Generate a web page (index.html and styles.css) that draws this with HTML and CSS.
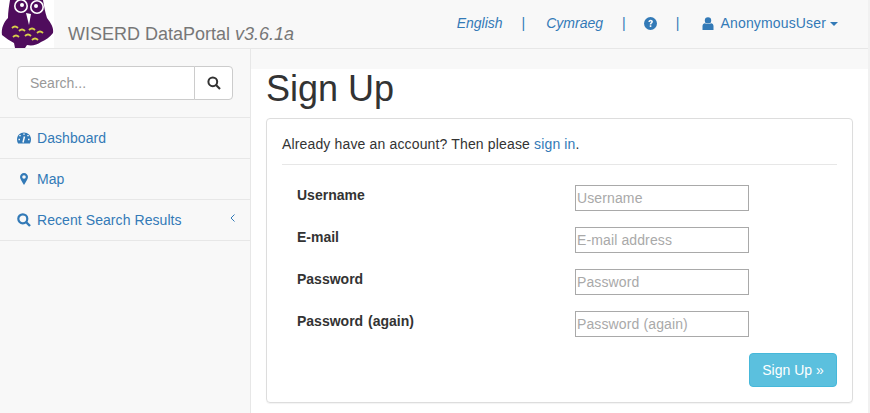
FILE: index.html
```html
<!DOCTYPE html>
<html lang="en">
<head>
    <meta charset="UTF-8">
    <title>Sign Up</title>
    <link rel="stylesheet" href="styles.css">
</head>
<body>
    <nav class="navbar">
        <div class="brand">
            <svg class="owl" width="54" height="48" viewBox="0 0 54 48">
                <rect width="54" height="48" fill="#fff"/>
                <path d="M10 0 H43 C44 6 45 12 47 18 C51 23 54 28 53 33 C50 37 46 40 41 42 C37 45 32 46 27 45 L25 48 H15 L14 43 C10 41 6 38 2 35 C1 28 4 22 8 18 C8 12 9 6 10 0 Z" fill="#4f0c5c"/>
                <circle cx="21" cy="6" r="6.200" fill="#4f0c5c" stroke="#fff" stroke-width="1.600"/>
                <circle cx="37" cy="7" r="6.200" fill="#4f0c5c" stroke="#fff" stroke-width="1.600"/>
                <circle cx="22" cy="5" r="2" fill="#fff"/>
                <circle cx="36" cy="6" r="2" fill="#fff"/>
                <path d="M26 13 L31 14 L29 25 Z" fill="#fff"/>
                <g fill="none" stroke="#d8cf4a" stroke-width="1.800">
                    <path d="M12 28 q3 -3 6 0"/><path d="M19 31 q3 -3 6 0"/><path d="M29 30 q3 -3 6 0"/><path d="M37 33 q3 -3 6 0"/>
                    <path d="M13 37 q3 -3 6 0"/><path d="M25 36 q3 -3 6 0"/><path d="M32 40 q3 -3 6 0"/>
                </g>
            </svg>
            <span class="brand-name">WISERD DataPortal <em>v3.6.1a</em></span>
        </div>
        <ul class="top-links">
            <li><a href="#"><em>English</em></a></li>
            <li class="sep">|</li>
            <li><a href="#"><em>Cymraeg</em></a></li>
            <li class="sep">|</li>
            <li class="help"><a href="#">
                <svg class="icon" width="13" height="13" viewBox="0 0 14 14"><circle cx="7" cy="7" r="7" fill="#337ab7"/><path d="M4.700 5.400 C4.800 3.800 5.900 3 7.200 3 C8.600 3 9.600 3.900 9.600 5 C9.600 6.500 7.900 6.600 7.900 8 H6.200 C6.200 6 7.800 6 7.800 5.100 C7.800 4.700 7.500 4.500 7.100 4.500 C6.700 4.500 6.400 4.800 6.300 5.500 Z M6.200 8.900 H7.900 V10.700 H6.200 Z" fill="#f8f8f8"/></svg>
            </a></li>
            <li class="sep">|</li>
            <li class="user-item"><a href="#" class="user">
                <svg class="icon" width="12" height="13" viewBox="0 0 12 13"><circle cx="6" cy="3.400" r="3.200" fill="#337ab7"/><path d="M0.500 13 V9 C0.500 7.400 1.700 6.300 3 6.200 C4.600 7.400 7.400 7.400 9 6.200 C10.300 6.300 11.500 7.400 11.500 9 V13 Z" fill="#337ab7"/></svg>
                AnonymousUser<span class="caret"></span>
            </a></li>
        </ul>
    </nav>

    <div class="wrapper">
        <aside class="sidebar">
            <div class="search-box">
                <form class="search-group">
                    <input type="text" placeholder="Search...">
                    <button type="button">
                        <svg width="14" height="14" viewBox="0 0 14 14"><circle cx="5.800" cy="5.800" r="4.400" fill="none" stroke="#333" stroke-width="2"/><path d="M9 9 L13 13" stroke="#333" stroke-width="2.200"/></svg>
                    </button>
                </form>
            </div>
            <ul class="side-menu">
                <li><a href="#">
                    <svg class="side-icon" width="14" height="12" viewBox="0 0 14 12"><path d="M7 0.500 C3 0.500 0 3.500 0 7.500 C0 9 0.400 10.400 1.100 11.500 H12.900 C13.600 10.400 14 9 14 7.500 C14 3.500 11 0.500 7 0.500 Z" fill="#337ab7"/><path d="M6 10.500 L7.500 4.500 M3 3 V4.300 M7 1.500 V2.800 M11 3 V4.300 M1.500 7.500 H3 M11 7.500 H12.500" stroke="#f8f8f8" stroke-width="1.500"/></svg>
                    Dashboard</a></li>
                <li><a href="#">
                    <svg class="side-icon pin" width="8" height="12" viewBox="0 0 8 12"><path fill-rule="evenodd" d="M4 0 C6.200 0 8 1.800 8 4 C8 6 5.500 9.500 4 12 C2.500 9.500 0 6 0 4 C0 1.800 1.800 0 4 0 Z M4 2.200 A1.800 1.800 0 1 0 4 5.800 A1.800 1.800 0 1 0 4 2.200 Z" fill="#337ab7"/></svg>
                    Map</a></li>
                <li><a href="#">
                    <svg class="side-icon" width="14" height="14" viewBox="0 0 14 14"><circle cx="5.800" cy="5.800" r="4.500" fill="none" stroke="#337ab7" stroke-width="2.200"/><path d="M9 9 L13 13" stroke="#337ab7" stroke-width="2.400"/></svg>
                    Recent Search Results
                    <svg class="chevron" width="5" height="8" viewBox="0 0 5 8"><path d="M4.500 0.500 L1 4 L4.500 7.500" fill="none" stroke="#337ab7"/></svg>
                </a></li>
            </ul>
        </aside>

        <main class="content">
            <h1>Sign Up</h1>
            <div class="panel">
                <p class="intro">Already have an account? Then please <a href="#">sign in</a>.</p>
                <form class="signup-form">
                    <div class="form-row">
                        <label for="username">Username</label>
                        <input type="text" id="username" placeholder="Username">
                    </div>
                    <div class="form-row">
                        <label for="email">E-mail</label>
                        <input type="text" id="email" placeholder="E-mail address">
                    </div>
                    <div class="form-row">
                        <label for="password1">Password</label>
                        <input type="text" id="password1" placeholder="Password">
                    </div>
                    <div class="form-row">
                        <label for="password2">Password (again)</label>
                        <input type="text" id="password2" placeholder="Password (again)">
                    </div>
                    <div class="form-actions">
                        <button type="submit">Sign Up »</button>
                    </div>
                </form>
            </div>
        </main>
    </div>
</body>
</html>
```

FILE: styles.css
```css
* {
    box-sizing: border-box;
}
html, body {
    height: 100%;
}
body {
    margin: 0;
    overflow: hidden;
    border-right: 2px solid #f1f1f1;
    background-color: #f8f8f8;
    color: #333;
    font-family: "Liberation Sans", Arial, sans-serif;
    font-size: 14px;
    line-height: 20px;
}
a {
    color: #337ab7;
    text-decoration: none;
}
ul {
    margin: 0;
    padding: 0;
    list-style: none;
}

.navbar {
    display: flex;
    justify-content: space-between;
    height: 49px;
    border-bottom: 1px solid #e7e7e7;
}
.brand {
    display: flex;
}
.owl {
    display: block;
}
.brand-name {
    margin: 24px 0 0 14px;
    color: #777;
    font-size: 18px;
}
.top-links {
    display: flex;
    align-items: center;
    height: 46px;
    padding-right: 30px;
}
.top-links .sep {
    margin: 0 21px 0 19px;
    color: #337ab7;
}
.help {
    margin-left: -3px;
}
.user-item {
    margin-left: 2px;
}
.icon {
    vertical-align: -2px;
}
.user {
    letter-spacing: .15px;
}
.user .icon {
    margin-right: 3px;
}
.caret {
    display: inline-block;
    margin-left: 4px;
    vertical-align: 2px;
    border-top: 4px solid #337ab7;
    border-left: 4px solid transparent;
    border-right: 4px solid transparent;
}

.wrapper {
    display: flex;
    height: 364px;
}
.sidebar {
    flex: none;
    width: 251px;
    border-right: 1px solid #e7e7e7;
}
.search-box {
    height: 69px;
    padding: 17px 17px 0;
    border-bottom: 1px solid #e7e7e7;
}
.search-group {
    display: flex;
    height: 34px;
}
.search-group input {
    flex: 1;
    min-width: 0;
    padding: 6px 12px;
    border: 1px solid #ccc;
    border-radius: 4px 0 0 4px;
    background: #fff;
    color: #555;
    font: inherit;
}
.search-group input::placeholder {
    color: #999;
}
.search-group button {
    width: 39px;
    margin-left: -1px;
    padding: 2px 0 0;
    border: 1px solid #ccc;
    border-radius: 0 4px 4px 0;
    background: #fff;
}
.side-menu li {
    height: 41px;
    border-bottom: 1px solid #e7e7e7;
}
.side-menu a {
    display: flex;
    align-items: center;
    height: 40px;
    padding: 0 15px 0 17px;
    letter-spacing: .07px;
}
.side-icon {
    width: 14px;
    margin-right: 6px;
}
.pin {
    padding: 0 3px;
}
.chevron {
    margin: -5px 0 0 auto;
}

.content {
    flex: 1;
    margin-top: 20px;
    padding: 0 15px;
    background-color: #fff;
}
h1 {
    margin: 0 0 9px;
    font-size: 36px;
    font-weight: 500;
    line-height: 40px;
}
.panel {
    width: 587px;
    height: 285px;
    padding: 15px;
    border: 1px solid #ddd;
    border-radius: 4px;
    box-shadow: 0 1px 1px rgba(0, 0, 0, .05);
}
.intro {
    margin: 0 0 20px;
    padding-bottom: 10px;
    border-bottom: 1px solid #e7e7e7;
    letter-spacing: .15px;
}
.form-row {
    display: flex;
    align-items: flex-start;
    height: 42px;
    padding-left: 15px;
}
.form-row label {
    width: 278px;
    font-weight: bold;
    word-spacing: 1px;
}
.form-row input {
    width: 174px;
    height: 26px;
    padding: 1px;
    border: 1px solid #a9a9a9;
    background: #fff;
    font: inherit;
    letter-spacing: .12px;
}
.form-row input::placeholder {
    color: #a9a9a9;
}
.form-actions {
    display: flex;
    justify-content: flex-end;
}
.form-actions button {
    width: 88px;
    height: 34px;
    border: 1px solid #46b8da;
    border-radius: 4px;
    background-color: #5bc0de;
    color: #fff;
    font: inherit;
}
```
